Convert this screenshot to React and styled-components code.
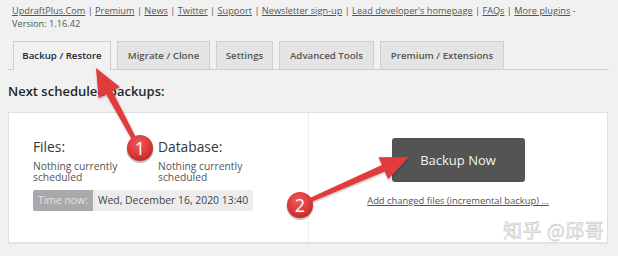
import React, { Fragment } from "react";
import styled, { createGlobalStyle } from "styled-components";

const GlobalStyle = createGlobalStyle`
  html, body {
    margin: 0;
    padding: 0;
    background: #f1f1f1;
  }
  body {
    font-family: "Open Sans", "Noto Sans", sans-serif;
    color: #32373c;
  }
`;

const Page = styled.div`
  position: relative;
  width: 618px;
  height: 256px;
  overflow: hidden;
  background: #f1f1f1;
`;

const Header = styled.div`
  padding: 4px 0 0 12px;
  font-size: 9.2px;
  line-height: 13px;
  color: #555;
  white-space: nowrap;
`;

const TopLink = styled.a`
  color: #555;
  text-decoration: underline;
`;

const NavBar = styled.nav`
  display: flex;
  align-items: flex-end;
  gap: 6px;
  height: 28px;
  margin: 11px 9px 0 8px;
  padding-left: 5px;
  border-bottom: 1px solid #cfcfcf;
`;

const Tab = styled.div`
  box-sizing: border-box;
  width: ${(p) => p.$w}px;
  height: ${(p) => (p.$active ? 29 : 28)}px;
  margin-bottom: ${(p) => (p.$active ? -1 : 0)}px;
  display: flex;
  align-items: center;
  justify-content: center;
  border: 1px solid #cfcfcf;
  border-bottom: none;
  background: ${(p) => (p.$active ? "#f1f1f1" : "#e4e4e4")};
  color: ${(p) => (p.$active ? "#23282d" : "#555")};
  font-size: 9.7px;
  font-weight: 600;
  padding-bottom: ${(p) => (p.$active ? 1 : 0)}px;
`;

const Heading = styled.h2`
  margin: 13px 0 0 8px;
  font-size: 13px;
  line-height: 16px;
  font-weight: 600;
  color: #23282d;
`;

const Panel = styled.div`
  box-sizing: border-box;
  height: 131px;
  margin: 13px 10px 0 8px;
  display: grid;
  grid-template-columns: 1fr 1fr;
  background: #fff;
  border: 1px solid #e0e0e0;
  box-shadow: 0 1px 1px rgba(0, 0, 0, 0.04);
`;

const LeftCol = styled.div`
  padding: 25px 0 0 24px;
`;

const ScheduleGrid = styled.div`
  display: grid;
  grid-template-columns: 125px 125px;
`;

const ScheduleTitle = styled.div`
  font-size: 13.8px;
  line-height: 18px;
  color: #32373c;
`;

const ScheduleText = styled.div`
  margin-top: 5px;
  font-size: 10.3px;
  line-height: 10.5px;
  color: #555;
  width: 90px;
`;

const TimeRow = styled.div`
  display: inline-flex;
  height: 21px;
  margin-top: 8px;
  border-radius: 2px;
  overflow: hidden;
  font-size: 10.4px;
  line-height: 21px;
`;

const TimeLabel = styled.span`
  padding: 0 5px;
  background: #a9a9a9;
  color: #e2e2e2;
`;

const TimeValue = styled.span`
  padding: 0 5px;
  background: #ececec;
  color: #444;
`;

const RightCol = styled.div`
  display: flex;
  flex-direction: column;
  align-items: center;
  padding-top: 25px;
  border-left: 1px solid #ececec;
`;

const BackupButton = styled.button`
  width: 133px;
  height: 44px;
  border: none;
  border-radius: 3px;
  background: #545454;
  color: #f2f2f2;
  font-family: inherit;
  font-size: 13px;
  cursor: pointer;
`;

const SmallLink = styled.a`
  margin-top: 13px;
  font-size: 9.4px;
  line-height: 12px;
  color: #555;
  text-decoration: underline;
`;

const Watermark = styled.div`
  position: absolute;
  left: 503px;
  top: 217px;
  font-family: "Noto Sans CJK SC", sans-serif;
  font-size: 19px;
  line-height: 26px;
  color: #f6f6f6;
  -webkit-text-stroke: 0.5px #bdbdbd;
  letter-spacing: 0.5px;
  white-space: nowrap;
`;

const Overlay = styled.svg`
  position: absolute;
  left: 0;
  top: 0;
  pointer-events: none;
`;

const links = [
  "UpdraftPlus.Com",
  "Premium",
  "News",
  "Twitter",
  "Support",
  "Newsletter sign-up",
  "Lead developer's homepage",
  "FAQs",
  "More plugins",
];

const tabs = [
  { label: "Backup / Restore", w: 98, active: true },
  { label: "Migrate / Clone", w: 93 },
  { label: "Settings", w: 57 },
  { label: "Advanced Tools", w: 95 },
  { label: "Premium / Extensions", w: 124 },
];

function Marker({ cx, cy, n }) {
  return (
    <g>
      <circle cx={cx} cy={cy + 1.5} r="13.5" fill="rgba(0,0,0,0.25)" />
      <circle cx={cx} cy={cy} r="13" fill="url(#redBall)" />
      <text
        x={cx}
        y={cy + 6.5}
        textAnchor="middle"
        fill="#fff"
        fontSize="18"
        fontFamily="Open Sans, sans-serif"
      >
        {n}
      </text>
    </g>
  );
}

function Arrows() {
  return (
    <Overlay width="618" height="256" viewBox="0 0 618 256">
      <defs>
        <radialGradient id="redBall" cx="45%" cy="35%" r="70%">
          <stop offset="0%" stopColor="#f25a5a" />
          <stop offset="70%" stopColor="#d83434" />
          <stop offset="100%" stopColor="#b32424" />
        </radialGradient>
        <filter id="soft" x="-20%" y="-20%" width="140%" height="140%">
          <feDropShadow dx="0.5" dy="1" stdDeviation="0.8" floodOpacity="0.3" />
        </filter>
      </defs>
      <g filter="url(#soft)" fill="#e23a3a">
        <polygon points="96,68 119.8,86.9 112.3,90.9 140.8,147.1 137.2,148.9 106.1,94.3 98.6,98.3" />
        <polygon points="409,157 378.5,157.2 381.9,165 298.2,203.2 299.8,206.8 384.7,171.4 388.1,179.2" />
      </g>
      <Marker cx={140} cy={148} n="1" />
      <Marker cx={300} cy={205} n="2" />
    </Overlay>
  );
}

export default function App() {
  return (
    <Page>
      <GlobalStyle />
      <Header>
        <div>
          {links.map((l, i) => (
            <Fragment key={l}>
              {i > 0 && " | "}
              <TopLink>{l}</TopLink>
            </Fragment>
          ))}
          {" -"}
        </div>
        <div>Version: 1.16.42</div>
      </Header>
      <NavBar>
        {tabs.map((t) => (
          <Tab key={t.label} $w={t.w} $active={t.active}>
            {t.label}
          </Tab>
        ))}
      </NavBar>
      <Heading>Next scheduled backups:</Heading>
      <Panel>
        <LeftCol>
          <ScheduleGrid>
            <div>
              <ScheduleTitle>Files:</ScheduleTitle>
              <ScheduleText>Nothing currently scheduled</ScheduleText>
            </div>
            <div>
              <ScheduleTitle>Database:</ScheduleTitle>
              <ScheduleText>Nothing currently scheduled</ScheduleText>
            </div>
          </ScheduleGrid>
          <TimeRow>
            <TimeLabel>Time now:</TimeLabel>
            <TimeValue>Wed, December 16, 2020 13:40</TimeValue>
          </TimeRow>
        </LeftCol>
        <RightCol>
          <BackupButton>Backup Now</BackupButton>
          <SmallLink>Add changed files (incremental backup) ...</SmallLink>
        </RightCol>
      </Panel>
      <Watermark>知乎 @邱哥</Watermark>
      <Arrows />
    </Page>
  );
}
